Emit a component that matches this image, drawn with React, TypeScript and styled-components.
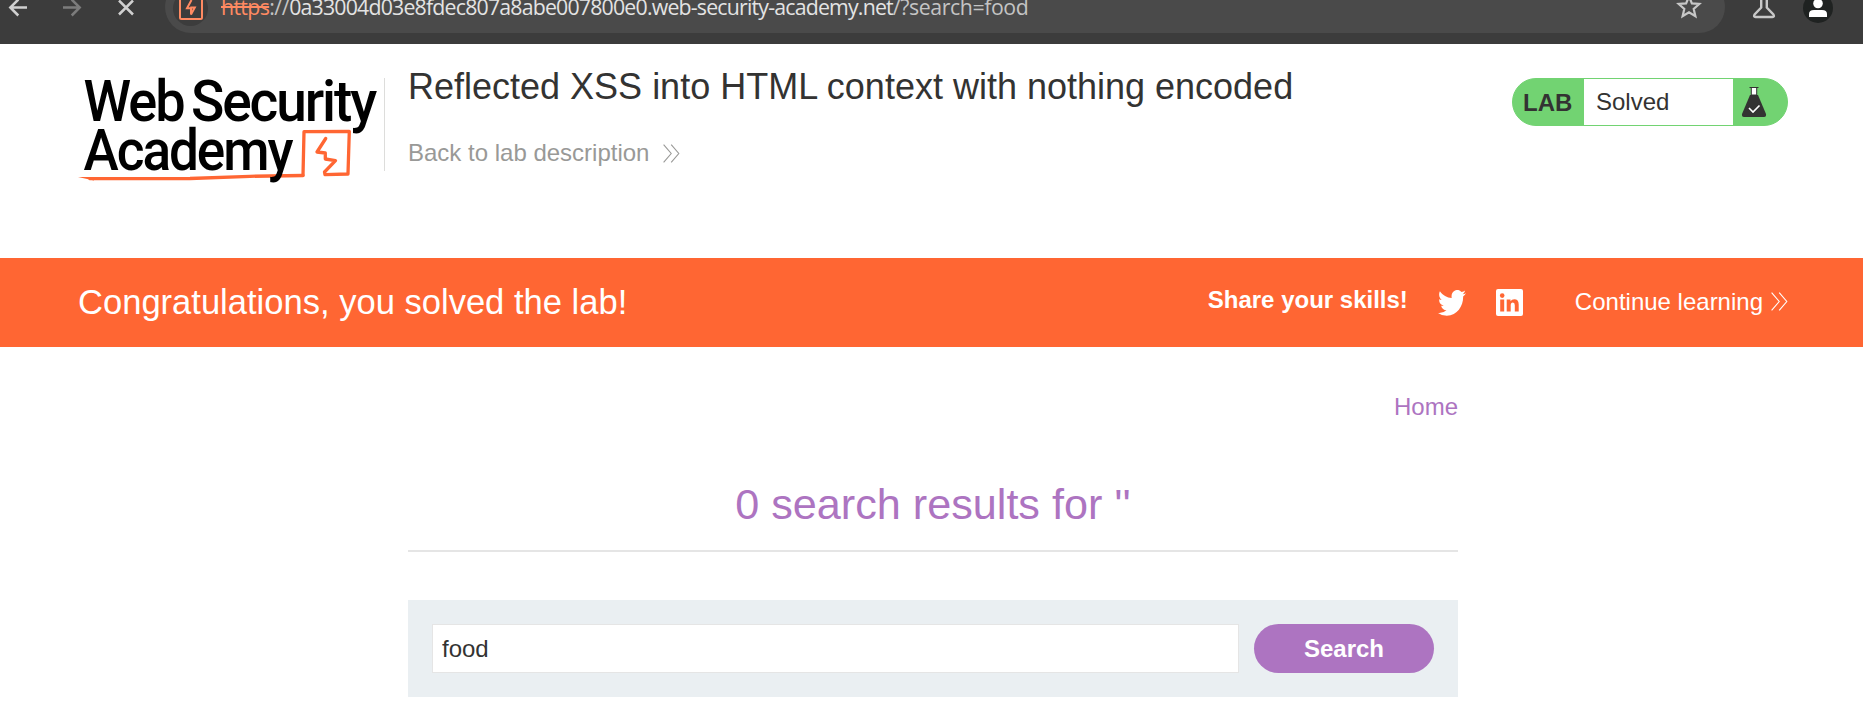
import React from "react";
import styled, { createGlobalStyle } from "styled-components";

const Global = createGlobalStyle`
  * { box-sizing: border-box; }
  body { margin: 0; background: #fff; color: #333332; font-family: "Liberation Sans", Arial, sans-serif; font-size: 24px; overflow: hidden; }
  h1, h2, p { margin: 0; font-weight: 400; }
  a { color: inherit; text-decoration: none; }
  svg { display: block; flex: none; }
`;

const Toolbar = styled.div`
  height: 44px;
  background: #3c3c3c;
  display: flex;
  align-items: flex-end;
  overflow: hidden;
`;
const NavButtons = styled.div`
  width: 165px;
  height: 44px;
  flex: none;
`;
const AddressBar = styled.div`
  width: 1560px;
  height: 52px;
  margin-bottom: 11px;
  flex: none;
  border-radius: 26px;
  background: #4a4a4a;
  display: flex;
  align-items: center;
  padding: 0 22px 0 8px;
`;
const SiteBadge = styled.div`
  width: 35px;
  height: 35px;
  margin-top: 2px;
  border-radius: 50%;
  background: #3c3c3c;
  display: flex;
  align-items: center;
  justify-content: center;
`;
const Url = styled.div`
  flex: 1;
  margin-left: 13px;
  font: 21.3px/30px "Open Sans", "Noto Sans", sans-serif;
  letter-spacing: -0.8px;
  color: #e3e3e3;
  white-space: nowrap;
`;
const Scheme = styled.span`
  color: #ff8a62;
  letter-spacing: -0.65px;
  text-decoration: line-through;
  text-decoration-thickness: 2px;
`;
const Dim = styled.span`
  color: #c4c4c4;
  letter-spacing: -0.42px;
`;

const Header = styled.header`
  height: 214px;
  display: flex;
  align-items: flex-start;
  padding: 20px 75px 0 78px;
`;
const TitleBlock = styled.div`
  flex: 1;
  padding-left: 23px;
`;
const Divider = styled.div`
  width: 1px;
  height: 93px;
  margin-top: 14px;
  background: #dddddb;
`;
const Title = styled.h1`
  font-size: 36px;
  line-height: 46px;
`;
const BackLink = styled.a`
  display: flex;
  align-items: center;
  gap: 14px;
  margin-top: 29px;
  line-height: 28px;
  height: 28px;
  color: #999997;
`;
const LabPill = styled.div`
  width: 276px;
  height: 48px;
  margin-top: 14px;
  border: 1px solid #72d372;
  border-radius: 24px;
  background: #72d372;
  display: flex;
  overflow: hidden;
  line-height: 46px;
`;
const LabTag = styled.strong`
  width: 71px;
  padding-left: 10px;
  line-height: 48px;
`;
const LabState = styled.p`
  width: 149px;
  padding-left: 12px;
  background: #fff;
`;
const LabFlask = styled.div`
  padding: 6px 0 0 8px;
`;

const Banner = styled.section`
  height: 89px;
  background: #ff6633;
  color: #fff;
  display: flex;
  align-items: center;
  padding: 0 75px 0 78px;
`;
const Congrats = styled.p`
  flex: 1;
  padding-bottom: 2px;
  font-size: 34.56px;
  line-height: 40px;
`;
const Share = styled.strong`
  padding-bottom: 6px;
  margin-right: 30px;
`;
const ShareIcons = styled.div`
  display: flex;
  align-items: center;
  gap: 30px;
`;
const Continue = styled.a`
  display: flex;
  align-items: center;
  gap: 8px;
  margin-left: 52px;
  padding-bottom: 2px;
`;

const Content = styled.main`
  width: 1050px;
  margin-left: 408px;
`;
const TopLinks = styled.nav`
  display: flex;
  justify-content: flex-end;
  padding-top: 46px;
  line-height: 28px;
  color: #ad74c1;
`;
const Results = styled.h2`
  height: 131px;
  padding-top: 59px;
  border-bottom: 2px solid #e5e5e5;
  font-size: 43.2px;
  line-height: 48px;
  text-align: center;
  color: #ad74c1;
`;
const SearchForm = styled.form`
  height: 97px;
  margin-top: 48px;
  padding: 24px;
  background: #eaeff2;
  display: flex;
  gap: 15px;
`;
const Input = styled.input`
  flex: 1;
  min-width: 0;
  height: 49px;
  padding: 0 9px;
  border: 1px solid #e5e5e5;
  outline: 0;
  background: #fff;
  font: inherit;
  color: #333332;
`;
const Button = styled.button`
  width: 180px;
  height: 49px;
  border: 0;
  border-radius: 25px;
  background: #ad74c1;
  color: #fff;
  font: bold 24px "Liberation Sans", Arial, sans-serif;
`;

const Chevrons = () => (
  <svg width="17" height="19" viewBox="0 0 17 19" fill="none" stroke="currentColor" strokeWidth="1.1">
    <path d="M.6.6 8.2 9.5.6 18.4M8.2.6l7.6 8.9-7.6 8.9" />
  </svg>
);

const Logo = () => (
  <svg width="306" height="130" viewBox="78 64 306 130">
    <g fill="none" stroke="#ff6633" strokeWidth="3.300" strokeLinecap="round" strokeLinejoin="round">
      <path d="M303 175.300 304 131.700 349.300 131.500 348 174 325 174.700 324.500 172 335.500 160.700 325.300 159 325.300 153 317 152 325.700 138.500" />
      <path d="M303 175.500 250 176.300 190 178.500 90 178.700" />
    </g>
    <path d="M78 177 94 180.400V177Z" fill="#ff6633" />
    <g fontFamily="Roboto, sans-serif" fontWeight="500" fontSize="57.500" letterSpacing="-2.200" fill="#000">
      <text x="83.500" y="121.300" textLength="100" lengthAdjust="spacingAndGlyphs">Web</text>
      <text x="191" y="121.300" textLength="184" lengthAdjust="spacingAndGlyphs">Security</text>
      <text x="83.500" y="169.700" textLength="208" lengthAdjust="spacingAndGlyphs">Academy</text>
    </g>
  </svg>
);

export default function App() {
  return (
    <>
      <Global />
      <Toolbar>
        <NavButtons>
          <svg width="165" height="44" viewBox="0 0 165 44" fill="none" strokeWidth="2.500">
            <path d="M27 7.500H10.500M18.300-.5l-8 8 8 8" stroke="#d0d0d0" />
            <path d="M63 7.500H79.500M71.700-.5l8 8-8 8" stroke="#7c7c7c" />
            <path d="M119 .5 133 14.500M133 .5 119 14.500" stroke="#d0d0d0" />
          </svg>
        </NavButtons>
        <AddressBar>
          <SiteBadge>
            <svg width="24" height="24" viewBox="0 0 24 24" fill="none" stroke="#ff8a62" strokeWidth="2">
              <rect x="1" y="1" width="22" height="22" rx="1.500" />
              <path d="M12.500 4 8 12.300H12.300V11.500H15.800L12 18.500V13" />
            </svg>
          </SiteBadge>
          <Url>
            <Scheme>https</Scheme>
            <Dim>://</Dim>0a33004d03e8fdec807a8abe007800e0.web-security-academy.net<Dim>/?search=food</Dim>
          </Url>
          <svg width="28" height="28" viewBox="0 0 28 28" fill="none" stroke="#c7c7c7" strokeWidth="2.200">
            <path d="M14 3.500 16.900 10.400 24.300 11 18.700 15.900 20.400 23.200 14 19.300 7.600 23.200 9.300 15.900 3.700 11 11.100 10.400Z" />
          </svg>
        </AddressBar>
        <svg width="138" height="44" viewBox="1725 0 138 44">
          <path d="M1761.200-2V7.500L1754.600 14.500Q1753.300 17 1755.500 17H1772.500Q1774.700 17 1773.400 14.500L1766.800 7.500V-2" fill="none" stroke="#c7c7c7" strokeWidth="2.400" />
          <circle cx="1818" cy="8" r="15" fill="#1f2221" />
          <circle cx="1818" cy="3.500" r="4.800" fill="#fff" />
          <path d="M1809 17V14Q1809 10 1814 10H1822Q1827 10 1827 14V17Z" fill="#fff" />
        </svg>
      </Toolbar>

      <Header>
        <Logo />
        <Divider />
        <TitleBlock>
          <Title>Reflected XSS into HTML context with nothing encoded</Title>
          <BackLink href="#">Back to lab description<Chevrons /></BackLink>
        </TitleBlock>
        <LabPill>
          <LabTag>LAB</LabTag>
          <LabState>Solved</LabState>
          <LabFlask>
            <svg width="26" height="32" viewBox="0 0 26 32">
              <path d="M8.500 2.500H17.500M10.300 2.500V10H15.700V2.500" fill="#fff" stroke="#333332" strokeWidth="1" />
              <path d="M9 10H17L25 29Q25.500 32 23 32H3Q.5 32 1 29Z" fill="#333332" />
              <path d="M8 23 12 27 18.500 20.500" fill="none" stroke="#fff" strokeWidth="1.600" />
            </svg>
          </LabFlask>
        </LabPill>
      </Header>

      <Banner>
        <Congrats>Congratulations, you solved the lab!</Congrats>
        <Share>Share your skills!</Share>
        <ShareIcons>
          <svg width="28" height="26" viewBox="0 2.200 24 19.700" preserveAspectRatio="none" fill="#fff">
            <path d="M23.953 4.570a10 10 0 0 1-2.825.775 4.958 4.958 0 0 0 2.163-2.723c-.951.555-2.005.959-3.127 1.184a4.920 4.920 0 0 0-8.384 4.482C7.690 8.095 4.067 6.130 1.640 3.162a4.822 4.822 0 0 0-.666 2.475c0 1.710.870 3.213 2.188 4.096a4.904 4.904 0 0 1-2.228-.616v.060a4.923 4.923 0 0 0 3.946 4.827 4.996 4.996 0 0 1-2.212.085 4.936 4.936 0 0 0 4.604 3.417 9.867 9.867 0 0 1-6.102 2.105c-.390 0-.779-.023-1.170-.067a13.995 13.995 0 0 0 7.557 2.209c9.053 0 13.998-7.496 13.998-13.985 0-.210 0-.420-.015-.630A9.935 9.935 0 0 0 24 4.590z" />
          </svg>
          <svg width="27" height="27" viewBox="0 0 27 27">
            <rect width="27" height="27" rx="2" fill="#fff" />
            <g fill="#ff6633">
              <circle cx="6.200" cy="6.600" r="2.300" />
              <path d="M4.200 10.500H8.200V22.500H4.200ZM10.700 10.500H14.500V12.200Q15.700 10.200 18.300 10.200 22.700 10.200 22.700 15.500V22.500H18.800V16.200Q18.800 13.500 16.900 13.500 14.700 13.500 14.700 16.200V22.500H10.700Z" />
            </g>
          </svg>
        </ShareIcons>
        <Continue href="#">Continue learning<Chevrons /></Continue>
      </Banner>

      <Content>
        <TopLinks><a href="#">Home</a></TopLinks>
        <Results>0 search results for ''</Results>
        <SearchForm>
          <Input defaultValue="food" />
          <Button type="button">Search</Button>
        </SearchForm>
      </Content>
    </>
  );
}
